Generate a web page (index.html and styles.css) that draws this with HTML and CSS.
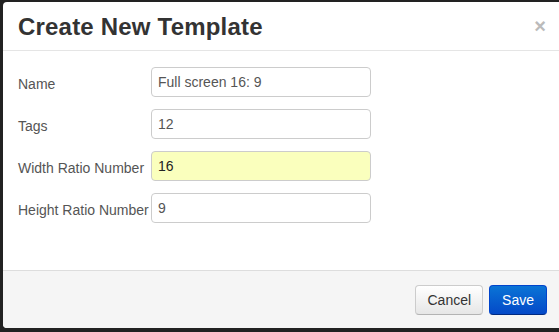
FILE: index.html
```html
<!DOCTYPE html>
<html>
<head>
  <link rel="stylesheet" href="styles.css">
</head>
<body>
  <div class="modal">
    <div class="modal-header">
      <h3>Create New Template</h3>
      <span class="close">&times;</span>
    </div>
    <div class="modal-body">
      <div class="row">
        <label>Name</label>
        <input type="text" value="Full screen 16: 9">
      </div>
      <div class="row">
        <label>Tags</label>
        <input type="text" value="12">
      </div>
      <div class="row">
        <label>Width Ratio Number</label>
        <input type="text" class="autofill" value="16">
      </div>
      <div class="row">
        <label>Height Ratio Number</label>
        <input type="text" value="9">
      </div>
    </div>
    <div class="modal-footer">
      <button class="btn">Cancel</button>
      <button class="btn btn-primary">Save</button>
    </div>
  </div>
</body>
</html>
```

FILE: styles.css
```css
html, body { margin: 0; padding: 0; }
body { background: #222; height: 332px; overflow: hidden; font-family: "Liberation Sans", Arial, sans-serif; color: #333; }
.modal { margin: 2px 0 0 3px; width: 560px; height: 326px; background: #fff; border-radius: 4px 0 0 4px; display: flex; flex-direction: column; overflow: hidden; }
.modal-header { height: 48px; padding: 0 15px; border-bottom: 1px solid #e5e5e5; display: flex; align-items: center; justify-content: space-between; }
.modal-header h3 { margin: 2px 0 0; font-size: 24px; font-weight: bold; letter-spacing: 0.2px; color: #333; }
.close { font-size: 20px; font-weight: bold; color: #bbb; margin-right: 2px; line-height: 1; }
.modal-body { flex: 1; padding: 16px 15px 0; display: flex; flex-direction: column; gap: 12px; }
.row { display: flex; align-items: flex-start; }
.row label { width: 133px; font-size: 14px; color: #555; padding-top: 9px; white-space: nowrap; }
.row input { width: 220px; height: 30px; box-sizing: border-box; border: 1px solid #ccc; border-radius: 4px; padding: 0 6px; font-family: inherit; font-size: 14px; color: #555; background: #fff; }
.row input.autofill { background: #faffbd; color: #222; }
.modal-footer { height: 58px; border-top: 1px solid #ddd; background: #f5f5f5; display: flex; justify-content: flex-end; align-items: flex-start; padding: 14px 16px 0; box-sizing: border-box; gap: 6px; }
.btn { height: 30px; padding: 0 11px; font-family: inherit; font-size: 14px; color: #333; border: 1px solid #ccc; border-bottom-color: #b3b3b3; border-radius: 4px; background: linear-gradient(#fff, #e6e6e6); }
.btn-primary { color: #fff; border-color: #0044cc #0044cc #002a80; background: linear-gradient(#0a74d6, #0449c8); padding: 0 12px; }
```
